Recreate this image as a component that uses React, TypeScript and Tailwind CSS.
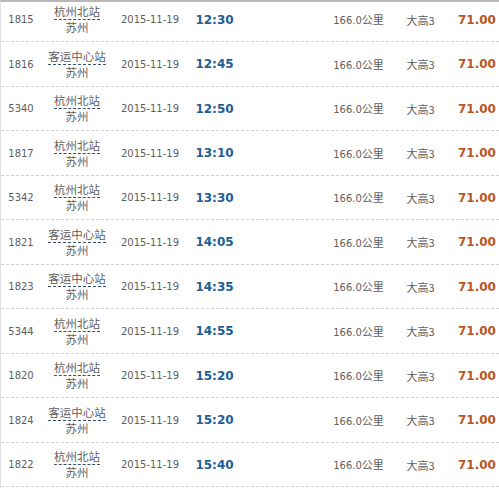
const rows = [
  { no: "1815", from: "杭州北站", time: "12:30" },
  { no: "1816", from: "客运中心站", time: "12:45" },
  { no: "5340", from: "杭州北站", time: "12:50" },
  { no: "1817", from: "杭州北站", time: "13:10" },
  { no: "5342", from: "杭州北站", time: "13:30" },
  { no: "1821", from: "客运中心站", time: "14:05" },
  { no: "1823", from: "客运中心站", time: "14:35" },
  { no: "5344", from: "杭州北站", time: "14:55" },
  { no: "1820", from: "杭州北站", time: "15:20" },
  { no: "1824", from: "客运中心站", time: "15:20" },
  { no: "1822", from: "杭州北站", time: "15:40" },
];

const num = "font-['DejaVu_Sans','Noto_Sans_CJK_SC',sans-serif]";
const cjk = "font-['Noto_Sans_CJK_SC',sans-serif]";

export default function App() {
  return (
    <div className="w-[499px] h-[488px] overflow-hidden bg-white border-t-2 border-t-[#b8b8b8] border-l border-l-[#e2e2e2]">
      <div className="-mt-[4.5px]">
        {rows.map((r, i) => (
          <div
            key={i}
            className="grid grid-cols-[40px_72px_74px_55px_1fr_79px_45px_56px] items-center h-[44.5px] border-b border-dashed border-[#d0d0d0] text-[#5e5e5e]"
          >
            <div className={`${num} text-[10px] text-center pt-[1px]`}>{r.no}</div>
            <div className={`${cjk} text-[11.5px] leading-[14px] flex flex-col items-center`}>
              <span className="border-b border-dashed border-[#3a5270] pb-[1px]">{r.from}</span>
              <span>苏州</span>
            </div>
            <div className={`${num} text-[10px] text-center pt-[1px]`}>2015-11-19</div>
            <div className={`${num} text-[12px] font-bold text-center text-[#225d94] pt-[1px]`}>{r.time}</div>
            <div />
            <div className={`${num} text-[10px] text-center pt-[1px]`}>
              166.0<span className={`${cjk} text-[11px]`}>公里</span>
            </div>
            <div className={`${cjk} text-[11px] text-center pt-[1px]`}>大高3</div>
            <div className={`${num} text-[12px] font-bold text-center pl-[12px] text-[#b9561e] pt-[1px]`}>71.00</div>
          </div>
        ))}
      </div>
    </div>
  );
}
